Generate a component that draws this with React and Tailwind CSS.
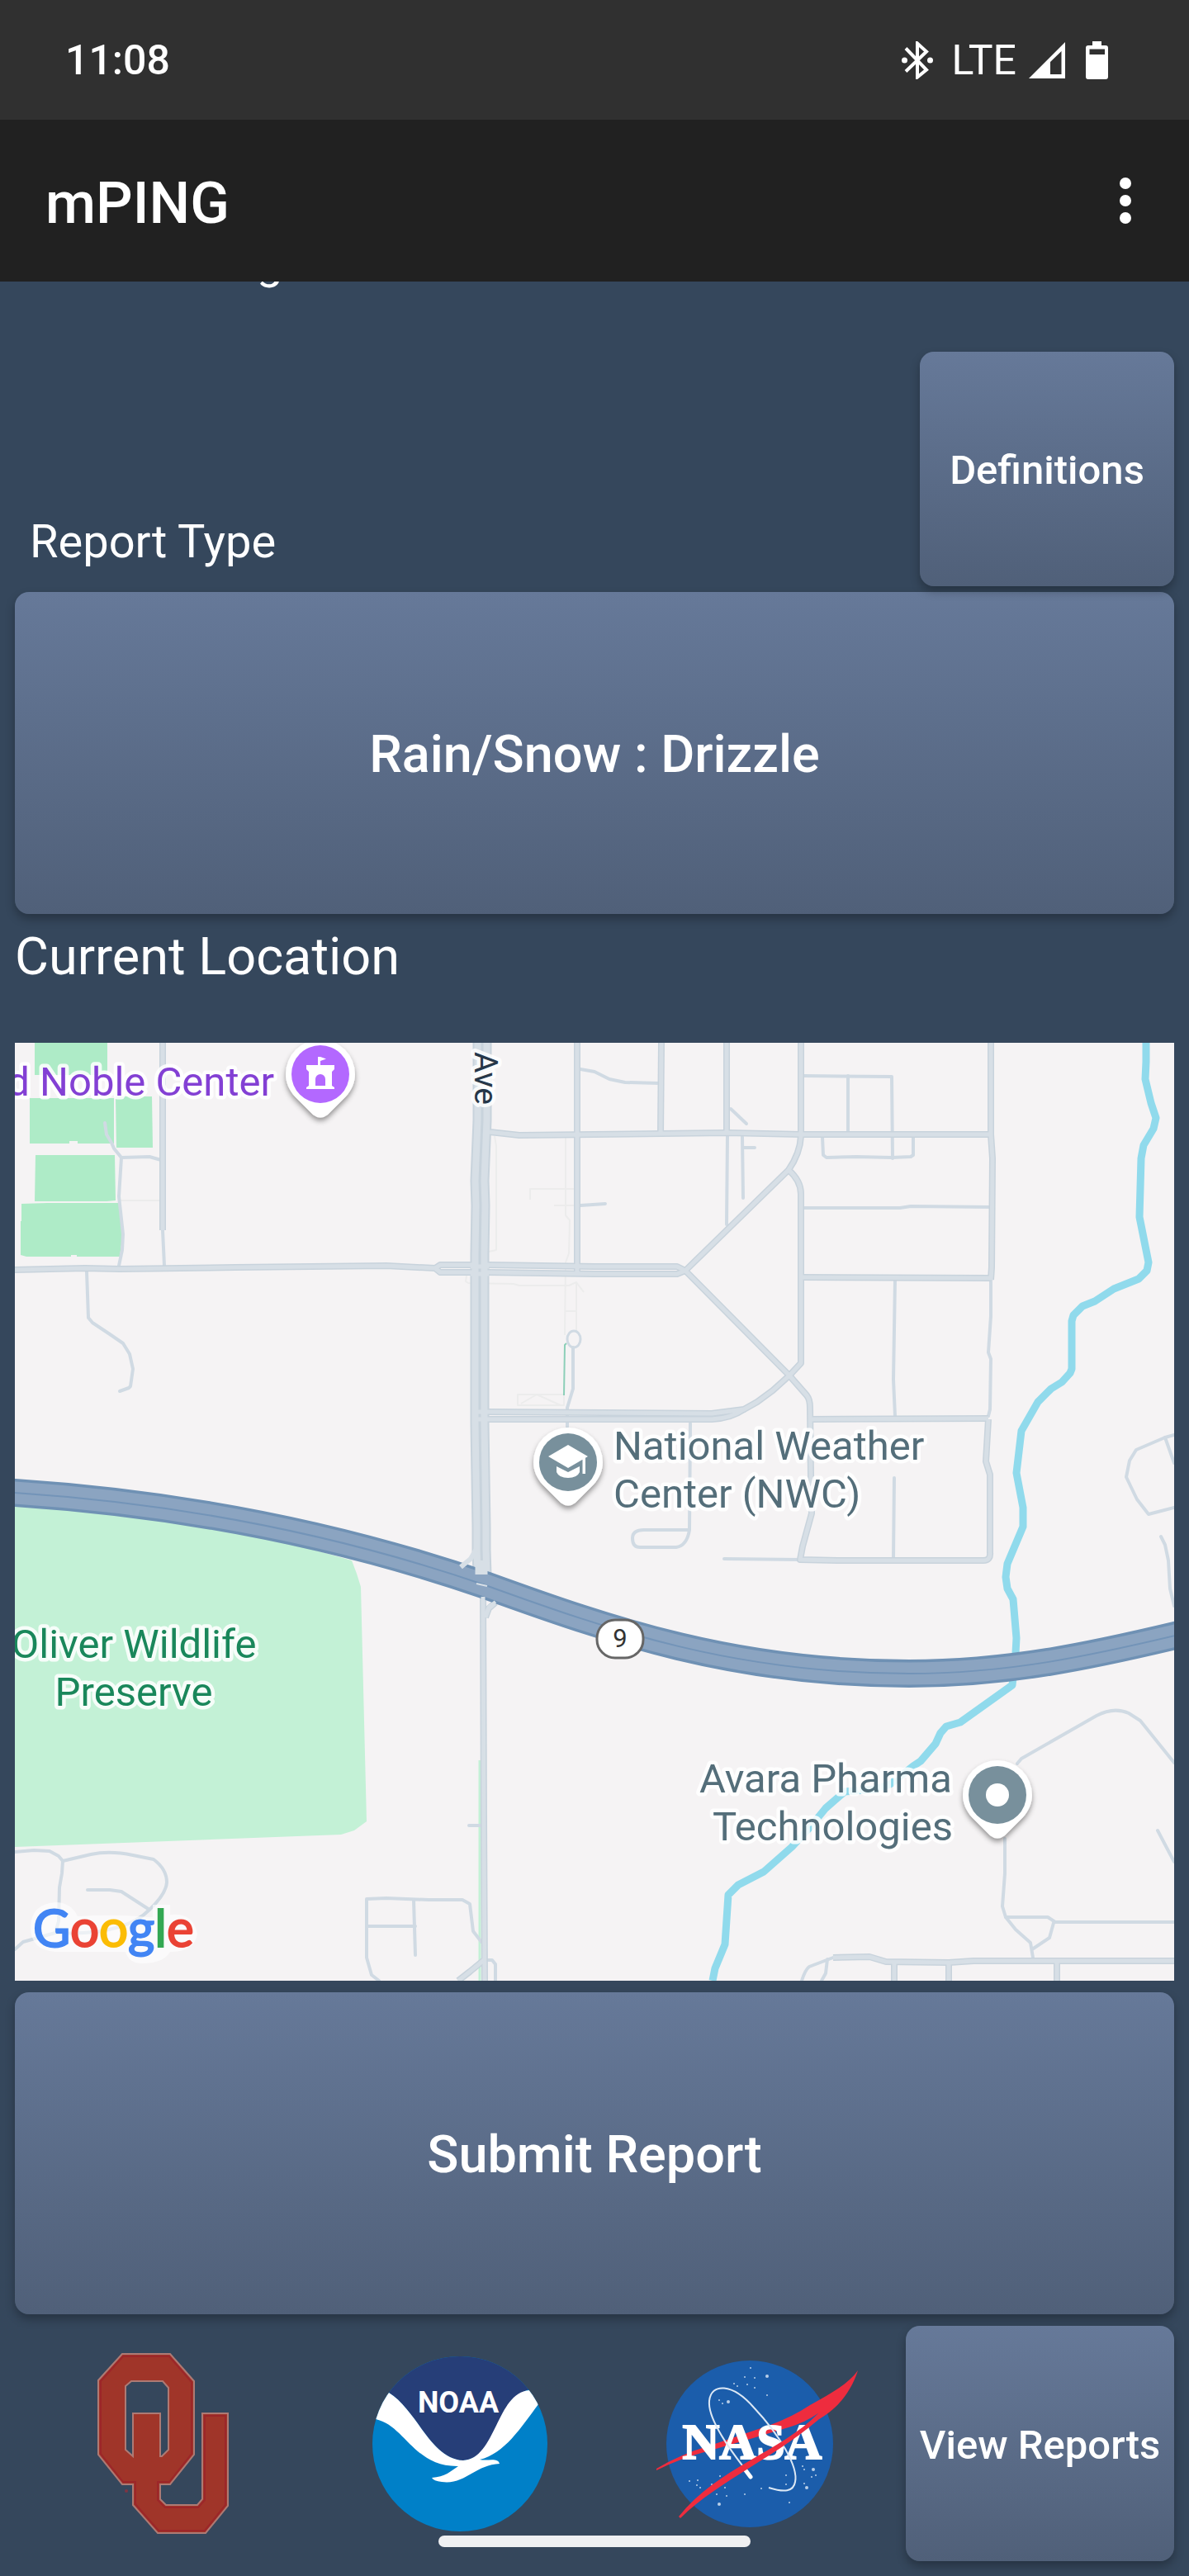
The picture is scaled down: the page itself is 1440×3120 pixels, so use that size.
import React from "react";

const buttonBase =
  "flex items-center justify-center rounded-[17px] bg-linear-to-b from-[#667999] to-[#506079] pt-1 font-medium text-white shadow-[0_6px_12px_rgba(0,0,0,0.28)]";

function StatusBar() {
  return (
    <div className="flex h-[145px] items-center justify-between bg-[#303030] pr-[98px] pl-[79px] text-white">
      <time className="text-[50px] leading-[58px] font-medium">11:08</time>
      <div className="flex items-center">
        <svg className="h-[46px] w-[40px]" viewBox="0 0 40 46" fill="none" aria-label="Bluetooth connected">
          <path d="M6 9L31 35L20 44V3L31 13L6 37" transform="translate(0 -.5)" stroke="#fff" strokeWidth="4" strokeMiterlimit="3" />
          <circle cx="4.500" cy="23" r="3.500" fill="#fff" />
          <circle cx="35.500" cy="23" r="3.500" fill="#fff" />
        </svg>
        <span className="ml-[22px] text-[50px] leading-[58px]">LTE</span>
        <svg className="ml-[15px] h-[44px] w-[44px]" viewBox="0 0 44 44" aria-label="Signal strength">
          <path fillRule="evenodd" fill="#fff" d="M44 0V44H0ZM26 24V39H39.500V11Z" />
        </svg>
        <svg className="ml-[25px] h-[46px] w-[27px]" viewBox="0 0 27 46" aria-label="Battery">
          <path
            fillRule="evenodd"
            fill="#fff"
            d="M8 0H19V5H24Q27 5 27 8V43Q27 46 24 46H3Q0 46 0 43V8Q0 5 3 5H8ZM4.500 9.500V16H23V9.500Z"
          />
        </svg>
      </div>
    </div>
  );
}

function AppBar() {
  return (
    <header className="flex h-[196px] items-center justify-between bg-[#212121] pr-[56px] pl-[55px] text-white">
      <h1 className="pt-1.5 text-[70px] leading-[80px] font-medium">mPING</h1>
      <button type="button" aria-label="More options" className="flex h-[84px] w-[42px] items-center justify-center">
        <svg className="h-[56px] w-[14px]" viewBox="0 0 14 56" fill="#fff">
          <circle cx="7" cy="7" r="7" />
          <circle cx="7" cy="28" r="7" />
          <circle cx="7" cy="49" r="7" />
        </svg>
      </button>
    </header>
  );
}

const fineRoads = [
  "M127 1360L129 1374L135 1384L138 1391L147 1402L181 1401L195 1405",
  "M147 1402L144 1449L149 1495L148 1514L144 1533",
  "M197 1490L199 1533",
  "M105 1540L107 1596L112 1602L133 1616L149 1627L157 1640L161 1658L158 1679L156 1681L145 1685",
  "M703 1295L720 1298L738 1307L757 1311L798 1312",
  "M703 1460L733 1458",
  "M694 1632V1682L687 1705V1728",
  "M974 1303L1080 1304L1081 1403",
  "M1027 1303V1371",
  "M996 1377L997 1399L1001 1402L1037 1401L1080 1402L1103 1401L1106 1399V1377",
  "M885 1343L904 1361",
  "M881 1376L880 1483",
  "M899 1377L900 1451M900 1390H914",
  "M970 1463H1090L1103 1461L1200 1462",
  "M1200 1550V1594L1197 1638L1200 1646L1199 1707L1197 1715",
  "M1084 1550L1082 1671L1084 1715",
  "M1083 1790L1082 1888",
  "M877 1888L969 1889",
  "M836 1724L835 1853L780 1853Q766 1853 766 1863Q766 1874 775 1874L819 1874Q832 1872 835 1853",
  "M1422 1738L1411 1741L1376 1756L1368 1769L1364 1789L1377 1816L1391 1834L1422 1826",
  "M1411 1741L1422 1772",
  "M1406 1861L1411 1871L1415 1890L1417 1924L1422 1945",
  "M1232 2136L1237 2130L1328 2078Q1349 2067 1367 2075L1381 2084L1422 2135",
  "M1402 2217L1422 2255",
  "M1217 2227V2269L1214 2309L1218 2322H1269L1278 2328H1422",
  "M1218 2322L1230 2337L1248 2353L1251 2371M1276 2329L1271 2347L1250 2361",
  "M971 2399Q975 2386 980 2382L1009 2371M1002 2373L1000 2390L995 2399",
  "M18 2243L41 2241L60 2242L71 2248L76 2254L75 2269L72 2286L71 2327L67 2341L28 2352L18 2361",
  "M76 2254L110 2246Q133 2241 161 2247L186 2252Q202 2264 202 2280Q201 2294 181 2313Q150 2345 67 2341",
  "M106 2289H133L147 2291L181 2313",
  "M459 2399L450 2392L444 2371V2300L468 2299L519 2301H560L569 2306L573 2339L583 2352",
  "M444 2333H503M501 2301L503 2368",
  "M590 2374H596L600 2379V2399",
  "M568 2211H583",
];

const localRoads = [
  "M197 1263V1490",
  "M18 1538L103 1536L145 1537L285 1535L468 1533L527 1536",
  "M527 1536L533 1532H592L720 1534H820L830 1539",
  "M527 1536L533 1541H592L720 1543H820L830 1539",
  "M593 1371L629 1375L720 1374L881 1372L970 1374H1200",
  "M699 1263V1541",
  "M801 1263L800 1374",
  "M880 1263V1372",
  "M1200 1263V1374L1202 1403L1201 1535L1200 1550",
  "M970 1263V1376Q969 1397 955 1417L830 1539L956 1666L977 1690Q981 1695 981 1705L982 1786L983 1833L972 1873L969 1889L1014 1890H1191Q1200 1890 1199 1880V1786L1194 1770L1197 1719",
  "M955 1417Q970 1430 970 1446V1651L956 1666L936 1684L917 1698L901 1707L862 1712L592 1710",
  "M901 1707Q885 1718 862 1719H592",
  "M981 1719L1197 1718",
  "M970 1547L1200 1548",
  "M1009 2371L1053 2370L1073 2376L1149 2377L1179 2375H1422",
  "M1083 2377V2399M1149 2377V2399M1280 2375V2399",
  "M555 2399L569 2388L586 2374",
  "M588 1959L592 1948L600 1941",
];

const walkways = [
  "M642 1453V1440H696M671 1460H696",
  "M599 1376L601 1388V1514L592 1516",
  "M685 1376V1472L690 1478L689 1518L685 1529L684 1617",
  "M565 1545L564 1552L567 1554L622 1555L629 1557H689L698 1553L707 1565M698 1553V1614M684 1588H698",
  "M627 1702V1689H683V1702ZM631 1700L650 1689L679 1702",
  "M146 1454H195",
];

const river =
  "M1388 1263V1286L1387 1307L1394 1336L1400 1354L1397 1367L1385 1387L1382 1403L1380 1474L1391 1529L1389 1539L1379 1549L1349 1561L1326 1576L1311 1582L1300 1593L1298 1600V1658L1296 1663L1286 1674L1273 1682L1257 1698L1237 1733L1231 1784L1239 1826V1849L1220 1894L1218 1910L1220 1924L1227 1937L1231 1984L1230 2002L1226 2041L1163 2086L1146 2091L1139 2099L1133 2112L1115 2133L1106 2139L1078 2161L1060 2167L1023 2170L1000 2190L982 2212L959 2237L925 2267L894 2283L882 2295L878 2355L866 2384L863 2399";

const highway = "M0 1807L18 1808C230 1822 420 1862 588 1920C740 1975 890 2027 1101 2027C1220 2027 1320 2006 1440 1977";
const avenue = "M584 1250V1357L581 1430L582 1460L581 1518V1724L583 1850V1877L584 1907";

function Pin({ x, y, color, children }) {
  return (
    <g transform={`translate(${x} ${y})`}>
      <path
        d="M0 -42A42 42 0 0 1 42 0C42 10 38 19 31 27L9 49Q0 56 -9 49L-31 27C-38 19 -42 10 -42 0A42 42 0 0 1 0 -42Z"
        fill="#fff"
        filter="url(#pin-shadow)"
      />
      <circle r="35" fill={color} />
      {children}
    </g>
  );
}

function LocationMap() {
  return (
    <svg viewBox="18 1263 1404 1136" className="mt-[68px] block w-full" role="img" aria-label="Map of current location">
      <defs>
        <filter id="pin-shadow" x="-20%" y="-20%" width="140%" height="150%">
          <feDropShadow dx="0" dy="4" stdDeviation="3" floodOpacity="0.4" />
        </filter>
      </defs>
      <rect x="18" y="1263" width="1404" height="1136" fill="#f5f3f4" />

      <g fill="#aeebc7">
        <path d="M42 1263H130V1302H42Z" />
        <path d="M36 1330H138V1385H94V1382H84V1385H36Z" />
        <path d="M140 1328H184L185 1390H141Z" />
        <path d="M43 1399H139L140 1454L129 1455H42Z" />
        <path d="M26 1458L57 1457H145L148 1500L145 1522H93V1520H86V1522H32L25 1520V1479H26Z" />
      </g>
      <path
        d="M18 1815L230 1835L426 1890L432 1906L437 1922L444 2206L429 2217L413 2222L18 2237Z"
        fill="#c3f1d6"
      />
      <path d="M581 2132V2399" stroke="#c3f1d6" strokeWidth="3" />
      <path d={river} fill="none" stroke="#90daec" strokeWidth="9" strokeLinejoin="round" />

      <g fill="none" strokeLinejoin="round">
        <g stroke="#ececec" strokeWidth="2">
          {walkways.map((d) => <path key={d} d={d} />)}
        </g>
        <g stroke="#d0dae3" strokeWidth="4" strokeLinecap="round">
          {fineRoads.map((d) => <path key={d} d={d} />)}
          <ellipse cx="695" cy="1622" rx="8" ry="10" strokeWidth="3" />
        </g>
        <path d="M686 1627L684 1629L683 1690" stroke="#8ccfb8" strokeWidth="2" />
        <g stroke="#c8d3dc" strokeWidth="8">
          {localRoads.map((d) => <path key={d} d={d} />)}
          <path d="M585 1935L586 2208L587 2399" />
          <path d={avenue} strokeWidth="23" />
        </g>
        <g stroke="#d7dfe6" strokeWidth="5">
          {localRoads.map((d) => <path key={d} d={d} />)}
          <path d={avenue} strokeWidth="19" />
        </g>
        <path d={avenue} stroke="#c8d3dc" strokeWidth="3" />
        <path d="M570 1534H592M570 1543H592M572 1710H592M572 1719H592" stroke="#d7dfe6" strokeWidth="5" />

        <path d={highway} stroke="#6f91b4" strokeWidth="34" />
        <path d={highway} stroke="#8ba4c1" strokeWidth="27" />
        <path d={highway} stroke="#7394b8" strokeWidth="2" />
        <g stroke="#d7dfe6">
          <path d="M585 1934L586 2208L587 2399" strokeWidth="5" />
          <path d="M577 1876L570 1888L558 1898" strokeWidth="6" />
          <path d="M583 1890V1907" strokeWidth="15" />
          <path d="M577 1918L590 1921" strokeWidth="2" />
          <path d="M588 1955L592 1946L600 1940" strokeWidth="4" />
        </g>
      </g>

      <g
        fontFamily="Roboto, sans-serif"
        fontSize="49"
        stroke="#fff"
        strokeWidth="9"
        strokeOpacity="0.85"
        strokeLinejoin="round"
        style={{ paintOrder: "stroke" }}
      >
        <text x="332" y="1327" textAnchor="end" fill="#8340d4">d Noble Center</text>
        <g fill="#546e7a">
          <text x="743" y="1768">National Weather</text>
          <text x="743" y="1826">Center (NWC)</text>
          <g textAnchor="end">
            <text x="1153" y="2171">Avara Pharma</text>
            <text x="1154" y="2229">Technologies</text>
          </g>
        </g>
        <g fill="#1a875b" textAnchor="middle">
          <text x="162" y="2008">Oliver Wildlife</text>
          <text x="162" y="2066">Preserve</text>
        </g>
        <text transform="translate(575 1274) rotate(90)" fontSize="39" fill="#263749">Ave</text>
      </g>

      <rect x="723" y="1962" width="56" height="46" rx="22" fill="#fff" stroke="#666" strokeWidth="3" />
      <text x="751" y="1995" textAnchor="middle" fontFamily="Roboto, sans-serif" fontSize="31" fill="#333">9</text>

      <Pin x={388} y={1301} color="#b368ff">
        <path
          fill="#fff"
          fillRule="evenodd"
          d="M-3 -21H0L7 -18.500L0 -16V-11H17V-6L14 -3V14L17 16V18H-17V16L-14 14V-3L-17 -6V-11H-3ZM-6 14H6V6A6 6 0 0 0 -6 6Z"
        />
      </Pin>
      <Pin x={688} y={1771} color="#78909c">
        <path fill="#fff" d="M0 -21L24 -7L0 7L-24 -7ZM17.500 -6H21V14H17.500ZM-14 5L0 12L14 5V12Q11 19 0 19Q-11 19 -14 12Z" />
      </Pin>
      <Pin x={1208} y={2174} color="#78909c">
        <circle r="14" fill="#fff" />
      </Pin>

      <g fill="#fff" fillOpacity="0.6">
        <path d="M67 2304Q86 2304 94 2321Q140 2318 178 2322H185V2307H206V2319Q234 2316 239 2342Q236 2364 206 2364Q198 2378 172 2378Q156 2378 152 2364H67Q37 2362 37 2334Q38 2306 67 2304Z" />
      </g>
      <text x="40" y="2358" fontFamily="Lato, sans-serif" fontSize="62" strokeWidth="2">
        <tspan fill="#4285f4" stroke="#4285f4">G</tspan>
        <tspan fill="#ea4335" stroke="#ea4335">o</tspan>
        <tspan fill="#fbbc04" stroke="#fbbc04">o</tspan>
        <tspan fill="#4285f4" stroke="#4285f4">g</tspan>
        <tspan fill="#34a853" stroke="#34a853">l</tspan>
        <tspan fill="#ea4335" stroke="#ea4335">e</tspan>
      </text>
    </svg>
  );
}

function OklahomaLogo() {
  return (
    <svg className="h-[220px] w-[160px]" viewBox="0 0 160 220" role="img" aria-label="University of Oklahoma">
      <path
        fill="#a03529"
        stroke="#ad7a74"
        strokeWidth="2"
        fillRule="evenodd"
        d="M30 1H88L117 34V123L88 159H76V177L83 184H121L127 177V73H158V185L131 218H73L43 184V159H30L1 123V33ZM34 40V117L43 125V73H76V125H78L86 117V42L79 34H41Z"
      />
      <path
        fill="none"
        stroke="#9c2629"
        strokeWidth="2"
        d="M31 4H87L114 35V122L87 156H73V178L82 187H122L130 178V76H155V184L130 215H74L46 183V156H31L4 122V34Z"
      />
      <circle cx="35" cy="167" r="2" fill="#7d3444" />
    </svg>
  );
}

function NoaaLogo() {
  return (
    <svg className="size-[212px]" viewBox="0 0 212 212" role="img" aria-label="NOAA">
      <clipPath id="noaa-disc">
        <circle cx="106" cy="106" r="106" />
      </clipPath>
      <g clipPath="url(#noaa-disc)">
        <path fill="#0080c8" d="M0 0H212V212H0Z" />
        <path fill="#263e78" d="M0 0H212V40H190C160 46 150 124 110 126C70 124 55 66 20 44H0Z" />
        <path
          fill="#fff"
          d="M0 30L20 44C55 66 70 124 110 126C150 124 150 44 190 41L212 30V44L201 58C180 86 160 118 130 125C140 127 152 122 154 130C125 131 112 156 84 152Q74 151 72 147C88 146 95 139 104 133C50 134 40 84 4 76L0 74Z"
        />
      </g>
      <text
        x="104"
        y="68"
        textAnchor="middle"
        fontFamily="'Liberation Sans Narrow', Roboto, sans-serif"
        fontWeight="700"
        fontSize="36"
        fill="#fff"
      >
        NOAA
      </text>
    </svg>
  );
}

const stars = [
  [114, 10, 1], [107, 21, 1], [119, 22, 1], [134, 20, 2], [110, 30, 1], [119, 34, 1], [134, 43, 1],
  [94, 29, 1], [98, 32, 1], [76, 49, 1], [87, 51, 2], [80, 53, 1], [40, 147, 1], [50, 146, 1],
  [49, 152, 1], [53, 155, 1], [67, 151, 1], [83, 155, 1], [73, 163, 1], [85, 165, 1], [107, 163, 1],
  [76, 175, 2], [77, 141, 1], [177, 129, 1], [190, 133, 2], [179, 133, 1], [193, 140, 1], [188, 142, 1],
  [157, 140, 1], [157, 151, 1], [179, 150, 1], [182, 155, 2], [161, 173, 1], [127, 156, 1],
];

function NasaLogo() {
  return (
    <svg className="h-[204px] w-[244px]" viewBox="0 0 244 204" role="img" aria-label="NASA">
      <circle cx="113" cy="102" r="101" fill="#1b5dab" />
      <g fill="#b9cfe9">
        {stars.map(([x, y, r]) => <circle key={`${x}-${y}`} cx={x} cy={y} r={r} />)}
      </g>
      <path
        fill="#ee2c3e"
        d="M0 132Q30 114 65 104L138 79Q165 69 186 55C212 40 232 30 244 13C234 45 212 64 197 72L196 65Q180 76 160 82L117 95L65 110Q30 119 0 134Z"
      />
      <text x="116" y="120" textAnchor="middle" fontFamily="Liberation Serif, serif" fontWeight="700" fontSize="62" fill="#fff" stroke="#fff" strokeWidth="2">
        NASA
      </text>
      <path
        fill="none"
        stroke="#dce8f5"
        strokeWidth="2"
        d="M115 142C85 105 62 70 64 50C66 28 92 28 118 58C150 92 172 130 168 148C166 160 155 161 136 155"
      />
      <path stroke="#fff" strokeWidth="5" strokeLinecap="round" d="M108 134L114 142" />
      <path fill="#ee2c3e" d="M27 190C75 130 150 112 196 65L206 64C150 116 75 146 29 192Z" />
    </svg>
  );
}

export default function App() {
  return (
    <div className="relative min-h-screen bg-[#35475c] pb-[18px] font-[Roboto,sans-serif] text-white">
      <StatusBar />
      <AppBar />
      <main className="px-[18px]">
        <div className="h-[85px] overflow-hidden pl-[293px]">
          <p className="-mt-[51px] text-[56px] leading-[56px]">g</p>
        </div>
        <div className="flex items-end justify-between">
          <h2 className="pb-[22px] pl-[18px] text-[56px] leading-[64px]">Report Type</h2>
          <button type="button" className={`${buttonBase} h-[284px] w-[308px] text-[49px] leading-[58px]`}>
            Definitions
          </button>
        </div>
        <button type="button" className={`${buttonBase} mt-[7px] h-[390px] w-full text-[63px] leading-[74px]`}>
          Rain/Snow : Drizzle
        </button>
        <h2 className="mt-4 text-[63px] leading-[72px]">Current Location</h2>
        <LocationMap />
        <button type="button" className={`${buttonBase} mt-[14px] h-[390px] w-full text-[63px] leading-[74px]`}>
          Submit Report
        </button>
        <footer className="mt-[14px] flex">
          <div className="grid flex-1 grid-cols-3 items-center justify-items-center">
            <OklahomaLogo />
            <NoaaLogo />
            <NasaLogo />
          </div>
          <button type="button" className={`${buttonBase} h-[285px] w-[325px] text-[49px] leading-[58px]`}>
            View Reports
          </button>
        </footer>
      </main>
      <div className="absolute bottom-[35px] left-1/2 h-[14px] w-[378px] -translate-x-1/2 rounded-full bg-[#eff0f2]" />
    </div>
  );
}
